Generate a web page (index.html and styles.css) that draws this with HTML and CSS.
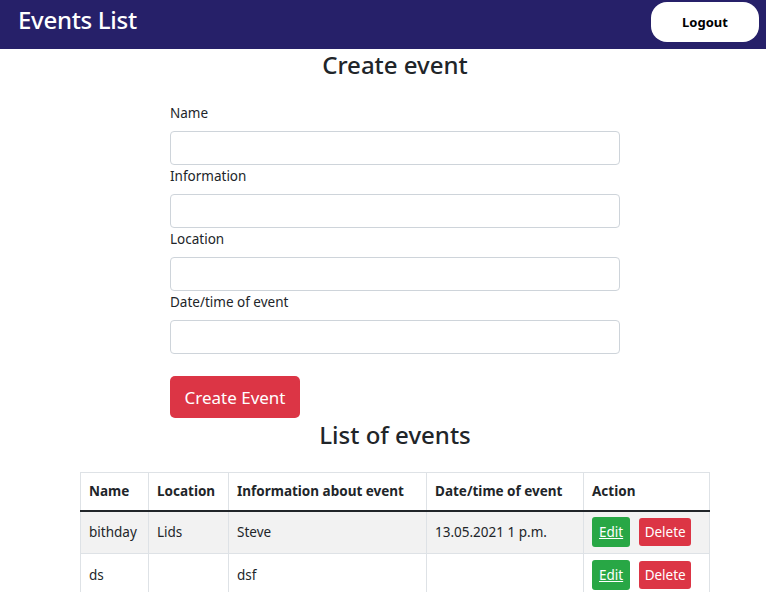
FILE: index.html
```html
<!DOCTYPE html>
<html>
<head>
<meta charset="utf-8">
<link rel="stylesheet" href="styles.css">
</head>
<body>
<header class="navbar">
  <span class="brand">Events List</span>
  <button class="logout">Logout</button>
</header>
<main class="page">
  <h2 class="title">Create event</h2>
  <form class="form">
    <label class="label">Name</label>
    <input class="input" type="text">
    <label class="label">Information</label>
    <input class="input" type="text">
    <label class="label">Location</label>
    <input class="input" type="text">
    <label class="label">Date/time of event</label>
    <input class="input" type="text">
    <button type="button" class="btn-create">Create Event</button>
  </form>
  <h2 class="title title-list">List of events</h2>
  <table class="table">
    <thead>
      <tr>
        <th class="c1">Name</th>
        <th class="c2">Location</th>
        <th class="c3">Information about event</th>
        <th class="c4">Date/time of event</th>
        <th class="c5">Action</th>
      </tr>
    </thead>
    <tbody>
      <tr class="striped">
        <td>bithday</td>
        <td>Lids</td>
        <td>Steve</td>
        <td>13.05.2021 1 p.m.</td>
        <td><div class="actions"><a class="btn-edit" href="#">Edit</a><button class="btn-delete">Delete</button></div></td>
      </tr>
      <tr>
        <td>ds</td>
        <td></td>
        <td>dsf</td>
        <td></td>
        <td><div class="actions"><a class="btn-edit" href="#">Edit</a><button class="btn-delete">Delete</button></div></td>
      </tr>
    </tbody>
  </table>
</main>
</body>
</html>
```
FILE: styles.css
```css
* { box-sizing: border-box; }
body {
  margin: 0;
  font-family: "Noto Sans", "Open Sans", sans-serif;
  color: #212529;
  font-size: 14px;
  background: #fff;
  overflow: hidden;
}
.navbar {
  height: 49px;
  background: #262069;
  display: flex;
  align-items: flex-start;
  justify-content: space-between;
  padding: 0 7px 0 18px;
}
.brand {
  color: #fff;
  font-size: 24px;
  font-weight: 500;
  line-height: 40px;
  letter-spacing: -0.3px;
}
.logout {
  margin-top: 2px;
  width: 108px;
  height: 40px;
  border: none;
  border-radius: 16px;
  background: #fff;
  color: #000;
  font-family: inherit;
  font-weight: 700;
  font-size: 13px;
}
.page {
  padding-left: 24px;
  display: flex;
  flex-direction: column;
  align-items: center;
}
.title {
  margin: 0;
  font-size: 24px;
  font-weight: 500;
  line-height: 32px;
}
.form {
  width: 450px;
  display: flex;
  flex-direction: column;
  margin-top: 21px;
}
.label {
  font-size: 13.5px;
  line-height: 23px;
  margin-bottom: 6px;
}
.input {
  height: 34px;
  border: 1px solid #ced4da;
  border-radius: 4px;
  margin: 0;
}
.btn-create {
  align-self: flex-start;
  margin-top: 22px;
  width: 130px;
  height: 42px;
  background: #dc3545;
  color: #fff;
  border: none;
  border-radius: 5px;
  font-family: inherit;
  font-size: 17px;
}
.title-list { margin-top: 1px; }
.table {
  margin-top: 21px;
  width: 630px;
  border-collapse: collapse;
  font-size: 13.5px;
}
.table th, .table td {
  border: 1px solid #dee2e6;
  padding: 0 8px;
  text-align: left;
  vertical-align: middle;
}
.table th { height: 38px; font-weight: 700; }
.table thead th { border-bottom: 2px solid #212529; }
.table td { height: 43px; }
.striped td { background: #f2f2f2; }
.c1 { width: 68px; }
.c2 { width: 80px; }
.c3 { width: 198px; }
.c4 { width: 157px; }
.actions { display: flex; gap: 9px; align-items: center; }
.btn-edit {
  background: #28a745;
  color: #fff;
  text-decoration: underline;
  padding: 0 7px;
  height: 30px;
  line-height: 30px;
  border-radius: 3px;
  font-size: 13.5px;
}
.btn-delete {
  background: #dc3545;
  color: #fff;
  border: none;
  height: 28px;
  width: 52px;
  border-radius: 3px;
  font-family: inherit;
  font-size: 13.5px;
  padding: 0;
}
```
